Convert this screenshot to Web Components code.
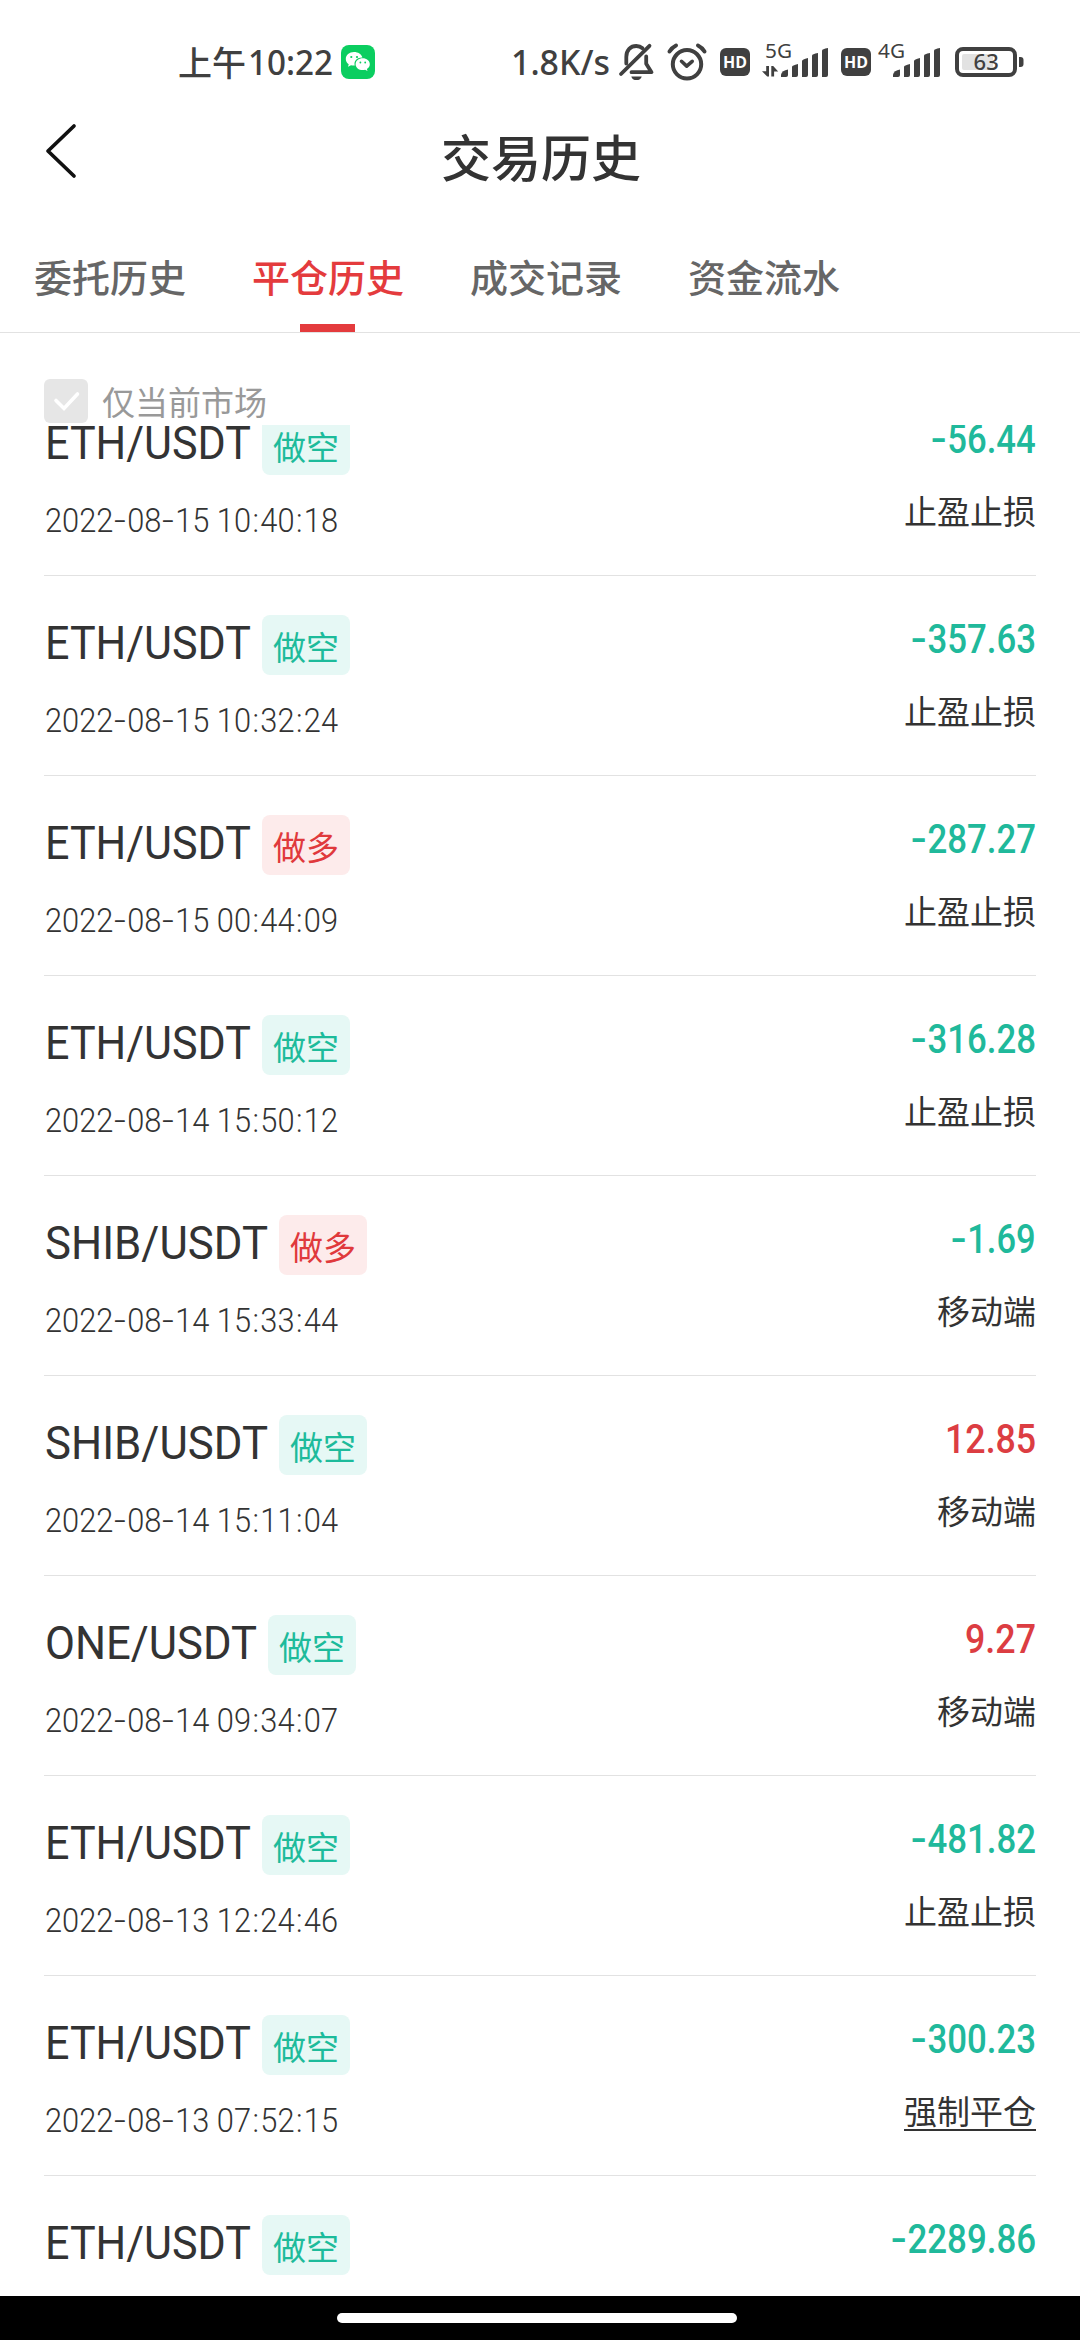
<!DOCTYPE html>
<html lang="zh-CN">
<head>
<meta charset="utf-8">
<title>交易历史</title>
<style>
html,body{margin:0;background:#fff}
body{width:1080px;height:2340px;overflow:hidden}
</style>
</head>
<body>
<history-app></history-app>
<script>
const CJK = '"Noto Sans CJK SC", sans-serif';

class BaseElement extends HTMLElement {
  render(html) {
    if (!this.shadowRoot) this.attachShadow({ mode: 'open' });
    this.shadowRoot.innerHTML = html;
  }
}

/* Text condensed horizontally to a given width; hyphens and colons are set wide */
class FitText extends BaseElement {
  connectedCallback() {
    const w = parseFloat(this.getAttribute('width'));
    let text = this.getAttribute('text');
    if (this.hasAttribute('wide')) {
      text = text.replace(/-/g, '<b>-</b>').replace(/:/g, '<u>:</u>');
    }
    this.render(`<style>
      :host{display:block;flex:none;width:${w}px;white-space:nowrap}
      span{display:inline-block;transform-origin:0 50%}
      b{display:inline-block;font-weight:inherit;padding:0 .08em;transform:scaleX(1.35)}
      u{text-decoration:none;padding:0 .045em}
    </style><span>${text}</span>`);
    const s = this.shadowRoot.querySelector('span');
    const n = s.getBoundingClientRect().width;
    if (n) s.style.transform = `scaleX(${w / n})`;
  }
}
customElements.define('fit-text', FitText);

const ICONS = {
  wechat: [34, 34, `<rect width="34" height="34" rx="8" fill="#0bce60"/>
    <path fill="#fff" d="M13 7C8.300 7 4.800 10 4.800 13.900c0 2.200 1.100 4 2.900 5.300L7 21.700l3-1.500c1 .3 2 .4 3 .4h.8c-.2-.6-.3-1.200-.3-1.800 0-3.500 3.300-6.300 7.400-6.300h.5C20.500 9.200 17.100 7 13 7z"/>
    <path fill="#fff" d="M21.700 13.300c-4 0-7.100 2.600-7.100 5.900s3.100 5.900 7.100 5.900c.8 0 1.700-.1 2.400-.4l2.400 1.300-.6-2.100c1.800-1.100 2.900-2.800 2.900-4.700 0-3.300-3.200-5.900-7.100-5.900z"/>
    <g fill="#0bce60"><circle cx="10.300" cy="12" r="1.100"/><circle cx="16" cy="12" r="1.100"/><circle cx="19.400" cy="17.500" r=".9"/><circle cx="24.200" cy="17.500" r=".9"/></g>`],
  mute: [36, 38, `<g fill="none" stroke="#404040" stroke-width="3.800" stroke-linecap="round" stroke-linejoin="round">
    <path d="M2 31 L30.500 2.800"/><path d="M7.300 20.500V14C7.300 7 11.600 3 17.300 3c2.600 0 4.600.8 6.200 2.200"/>
    <path d="M27.200 13.500v7.300L32.500 29.200H12.500"/></g><path fill="#404040" d="M12.300 33.400h10.400c-.5 2.300-2.500 3.700-5.200 3.700s-4.700-1.400-5.200-3.700z"/>`],
  alarm: [40, 38, `<g fill="none" stroke="#404040" stroke-width="4" stroke-linecap="round" stroke-linejoin="round">
    <circle cx="20" cy="21.300" r="14.200"/><path d="M2.500 8.500 Q5 4.500 9 2.500M37.500 8.500 Q35 4.500 31 2.500"/><path stroke-width="3.600" d="M14.500 18.300l5.200 4.800 5.500-4.800"/></g>`],
  hd: [30, 28, `<rect width="30" height="28" rx="6" fill="#404040"/><text x="15" y="19.500" text-anchor="middle" textLength="24" lengthAdjust="spacingAndGlyphs" font-family="Open Sans" font-weight="700" font-size="16" fill="#fff">HD</text>`],
  bars: [48, 29, `<g fill="#404040"><path d="M0 29v-2.500q1-4 7-5v5.500q0 2-2 2z"/><path d="M11 29V18.500q0-1 6-2.500v11q0 2-2 2z"/><path d="M21 29V13q0-1.500 6-3v17q0 2-2 2z"/><path d="M31 29V7.500q0-1.500 6-2.500v22q0 2-2 2z"/><path d="M41 29V2.500q0-1.500 6-2.500v27q0 2-2 2z"/></g>`]
};

class UiIcon extends BaseElement {
  connectedCallback() {
    const [w, h, body] = ICONS[this.getAttribute('name')];
    this.render(`<style>:host{display:block;flex:none;width:${w}px;height:${h}px}svg{display:block;overflow:visible}</style>
      <svg width="${w}" height="${h}" viewBox="0 0 ${w} ${h}">${body}</svg>`);
  }
}
customElements.define('ui-icon', UiIcon);

class MobileSignal extends BaseElement {
  connectedCallback() {
    const data = this.hasAttribute('data');
    const shift = data ? 19 : 15;
    this.render(`<style>:host{display:block;flex:none;width:${shift + 48}px;height:35px}svg{display:block;overflow:visible}</style>
      <svg width="${shift + 48}" height="35">
      <text x="${data ? 3 : 0}" y="15.500" textLength="27" lengthAdjust="spacingAndGlyphs" font-family="Noto Sans" font-weight="400" font-size="19.500" fill="#404040">${this.getAttribute('type')}</text>
      ${data ? '<path fill="#404040" d="M4.200 24H7v10.500H5.200L0 29.300h4.200zM9.300 24h1.900l5 5.500h-4.100v5H9.300z"/>' : ''}
      <g transform="translate(${shift} 6)">${ICONS.bars[2]}</g></svg>`);
  }
}
customElements.define('mobile-signal', MobileSignal);

class BatteryMeter extends BaseElement {
  connectedCallback() {
    this.render(`<style>:host{display:block;flex:none;width:69px;height:30px}svg{display:block}</style>
      <svg width="69" height="30"><rect x="7" y="7" width="31" height="16" rx="2" fill="#e2e2e2"/>
      <rect x="2" y="2" width="58" height="26" rx="6" fill="none" stroke="#404040" stroke-width="4"/>
      <path fill="#404040" d="M64 10h1.500q3 0 3 3v4q0 3-3 3H64z"/>
      <text x="31.200" y="23.200" text-anchor="middle" font-family="Noto Sans" font-weight="500" font-size="22" fill="#404040">${this.getAttribute('level')}</text></svg>`);
  }
}
customElements.define('battery-meter', BatteryMeter);

class StatusBar extends BaseElement {
  connectedCallback() {
    this.render(`<style>
      :host{display:flex;box-sizing:border-box;height:100px;padding:37px 56px 13px 178px;align-items:center;justify-content:space-between;color:#404040;font:500 34px/50px "Noto Sans",${CJK}}
      .l,.r{display:flex;align-items:center}
      .zh{font-family:${CJK};width:70px}
      .l ui-icon{margin-left:8px}
      .speed{margin-right:9px}
      .alarm{margin:-1px 13px 0 12px}
      .sig1{margin:-6px 12px 0}
      .sig2{margin:-6px 14px 0 7px}
    </style>
    <div class="l"><span class="zh">上午</span><fit-text width="85" text="10:22"></fit-text><ui-icon name="wechat"></ui-icon></div>
    <div class="r"><fit-text class="speed" width="99" text="1.8K/s"></fit-text><ui-icon name="mute"></ui-icon><ui-icon class="alarm" name="alarm"></ui-icon><ui-icon name="hd"></ui-icon><mobile-signal class="sig1" type="5G" data></mobile-signal><ui-icon name="hd"></ui-icon><mobile-signal class="sig2" type="4G"></mobile-signal><battery-meter level="63"></battery-meter></div>`);
  }
}
customElements.define('status-bar', StatusBar);

class NavHeader extends BaseElement {
  connectedCallback() {
    this.render(`<style>
      :host{display:grid;box-sizing:border-box;grid-template-columns:200px 1fr 200px;height:110px;align-items:center}
      svg{display:block;margin:-9px 0 0 44px}
      h1{margin:0;padding-left:2px;text-align:center;font:500 50px/74px ${CJK};color:#333}
    </style><svg width="34" height="56" fill="none" stroke="#111" stroke-width="3.700" stroke-linecap="round" stroke-linejoin="round"><path d="M30 3L4 28 30 53"/></svg><h1><slot></slot></h1>`);
  }
}
customElements.define('nav-header', NavHeader);

class TabItem extends BaseElement {
  connectedCallback() {
    const on = this.hasAttribute('active');
    this.render(`<style>
      :host{display:flex;flex-direction:column;justify-content:space-between;align-items:center;width:152px;height:84px;color:${on ? '#e43b3d' : '#666'};font:500 38px/56px ${CJK};white-space:nowrap}
      i{width:55px;height:8px;margin-right:2px;background:${on ? '#e43b3d' : 'none'}}
    </style><slot></slot><i></i>`);
  }
}
customElements.define('tab-item', TabItem);

class TabBar extends BaseElement {
  connectedCallback() {
    this.render(`<style>:host{display:flex;box-sizing:border-box;gap:66px;padding:38px 34px 0;height:123px;border-bottom:1px solid #e2e2e2}</style><slot></slot>`);
  }
}
customElements.define('tab-bar', TabBar);

class MarketFilter extends BaseElement {
  connectedCallback() {
    this.render(`<style>
      :host{display:flex;box-sizing:border-box;height:92px;padding:46px 44px 2px;gap:14px;align-items:center;color:#999;font:400 33px/44px ${CJK}}
      svg{display:block}
    </style><svg width="44" height="44"><rect width="44" height="44" rx="6" fill="#e6e6e6"/><path d="M12 21.500L20 29.500 33.500 15" fill="none" stroke="#fff" stroke-width="3.600" stroke-linecap="round"/></svg><span><slot></slot></span>`);
  }
}
customElements.define('market-filter', MarketFilter);

class SideBadge extends BaseElement {
  connectedCallback() {
    const long = this.getAttribute('side') === 'long';
    this.render(`<style>:host{display:block;flex:none;width:88px;height:60px;border-radius:8px;text-align:center;font:400 33px/62px ${CJK};
      color:${long ? '#e0393c' : '#1dbb9b'};background:${long ? '#fdebeb' : '#e6f8f5'}}</style>${long ? '做多' : '做空'}`);
  }
}
customElements.define('side-badge', SideBadge);

const NAME_WIDTH = { ETH: 206, SHIB: 223, ONE: 212 };

class TradeRow extends BaseElement {
  connectedCallback() {
    const a = n => this.getAttribute(n);
    const amount = a('amount'), neg = amount[0] === '-';
    const w = amount.replace(/\D/g, '').length * 20.2 + 10.4 + (neg ? 14.6 : 0);
    this.render(`<style>
      :host{display:flex;box-sizing:border-box;height:200px;margin:0 44px;border-bottom:1px solid #e2e2e2;justify-content:space-between;color:#333;font-family:Roboto,${CJK}}
      .info{padding:39px 0 0 1px}
      .head{display:flex;gap:11px;font-size:47px;line-height:56px;height:60px}
      .time{font-size:33.500px;line-height:40px;font-weight:350;margin-top:26px}
      .result{display:flex;flex-direction:column;align-items:flex-end;padding-top:40px}
      .amount{font-size:40px;line-height:48px;font-weight:500;color:${neg ? '#20b99b' : '#dc3d42'}}
      .how{font:400 33px/48px ${CJK};margin-top:22px}
      .forced{text-decoration:underline;text-decoration-thickness:2px;text-underline-offset:5px;text-decoration-skip-ink:none}
    </style>
    <div class="info"><div class="head"><fit-text width="${NAME_WIDTH[a('coin')]}" text="${a('coin')}/USDT"></fit-text><side-badge side="${a('side')}"></side-badge></div>
    <fit-text wide class="time" width="293" text="${a('time')}"></fit-text></div>
    <div class="result"><fit-text wide class="amount" width="${w}" text="${amount}"></fit-text><div class="how ${a('how') === '强制平仓' ? 'forced' : ''}">${a('how')}</div></div>`);
  }
}
customElements.define('trade-row', TradeRow);

const TRADES = [
  ['ETH', 'short', '2022-08-15 10:40:18', '-56.44', '止盈止损'],
  ['ETH', 'short', '2022-08-15 10:32:24', '-357.63', '止盈止损'],
  ['ETH', 'long', '2022-08-15 00:44:09', '-287.27', '止盈止损'],
  ['ETH', 'short', '2022-08-14 15:50:12', '-316.28', '止盈止损'],
  ['SHIB', 'long', '2022-08-14 15:33:44', '-1.69', '移动端'],
  ['SHIB', 'short', '2022-08-14 15:11:04', '12.85', '移动端'],
  ['ONE', 'short', '2022-08-14 09:34:07', '9.27', '移动端'],
  ['ETH', 'short', '2022-08-13 12:24:46', '-481.82', '止盈止损'],
  ['ETH', 'short', '2022-08-13 07:52:15', '-300.23', '强制平仓'],
  ['ETH', 'short', '', '-2289.86', '']
];

class TradeList extends BaseElement {
  connectedCallback() {
    this.render(`<style>:host{display:block;flex:1;min-height:0;overflow:hidden}div{margin-top:-49px}</style><div>${
      TRADES.map(t => `<trade-row coin="${t[0]}" side="${t[1]}" time="${t[2]}" amount="${t[3]}" how="${t[4]}"></trade-row>`).join('')}</div>`);
  }
}
customElements.define('trade-list', TradeList);

class HomeBar extends BaseElement {
  connectedCallback() {
    this.render(`<style>:host{display:flex;height:44px;background:#000;justify-content:center;align-items:center}i{width:400px;height:10px;border-radius:5px;background:#fff;margin-right:6px}</style><i></i>`);
  }
}
customElements.define('home-bar', HomeBar);

class HistoryApp extends BaseElement {
  connectedCallback() {
    this.render(`<style>:host{display:flex;flex-direction:column;width:1080px;height:2340px;overflow:hidden;background:#fff}
      status-bar,nav-header,tab-bar,market-filter,home-bar{flex:none}</style>
      <status-bar></status-bar><nav-header>交易历史</nav-header>
      <tab-bar><tab-item>委托历史</tab-item><tab-item active>平仓历史</tab-item><tab-item>成交记录</tab-item><tab-item>资金流水</tab-item></tab-bar>
      <market-filter>仅当前市场</market-filter><trade-list></trade-list><home-bar></home-bar>`);
  }
}
customElements.define('history-app', HistoryApp);
</script>
</body>
</html>
